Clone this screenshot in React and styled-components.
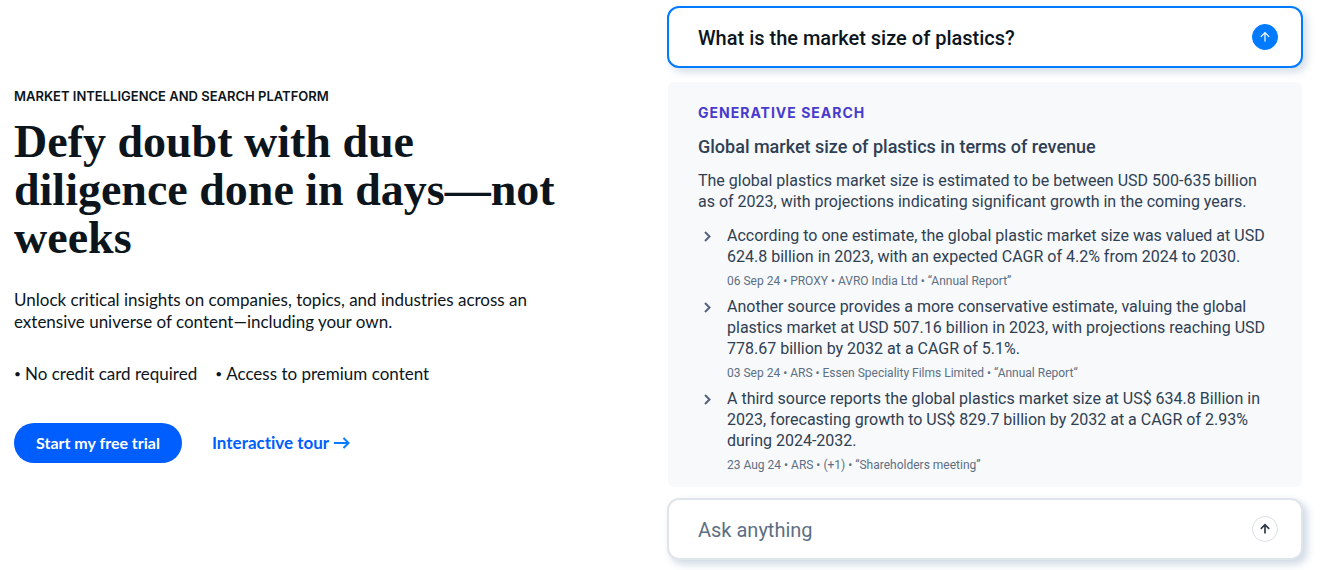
import React from "react";
import styled, { createGlobalStyle } from "styled-components";

const GlobalStyle = createGlobalStyle`
  *, *::before, *::after { box-sizing: border-box; }
  body { margin: 0; background: #fff; color: #0c151c; font-family: Lato, "Liberation Sans", sans-serif; font-variant-ligatures: none; }
  h1, h2, h3, p, ul { margin: 0; padding: 0; }
  ul { list-style: none; }
`;

const Hero = styled.main`
  display: grid;
  grid-template-columns: 1fr 1fr;
  align-items: start;
`;

const Intro = styled.section`
  padding: 88px 60px 0 14px;
`;

const Eyebrow = styled.p`
  font-family: Inter, sans-serif;
  font-size: 13px;
  font-weight: 600;
  line-height: 16px;
  text-transform: uppercase;
`;

const Title = styled.h1`
  margin-top: 14px;
  font-family: "Liberation Serif", serif;
  font-size: 46px;
  font-weight: 700;
  line-height: 48px;
`;

const Lead = styled.p`
  margin-top: 27px;
  font-size: 17px;
  line-height: 22px;
`;

const Perks = styled.ul`
  display: flex;
  gap: 18px;
  margin-top: 30px;
  font-size: 17px;
  line-height: 22px;
`;

const Perk = styled.li`
  display: flex;
  gap: 4px;
  &::before { content: "•"; font-size: 12px; }
`;

const Actions = styled.div`
  display: flex;
  align-items: center;
  gap: 30px;
  margin-top: 38px;
`;

const PrimaryButton = styled.button`
  height: 40px;
  padding: 0 22px;
  border: 0;
  border-radius: 20px;
  background: #005eff;
  color: #fff;
  font: 700 16px/20px Lato, "Liberation Sans", sans-serif;
  cursor: pointer;
`;

const TourLink = styled.a`
  display: flex;
  align-items: center;
  gap: 5px;
  color: #005eff;
  font-size: 17px;
  font-weight: 700;
  line-height: 20px;
  text-decoration: none;
`;

const Demo = styled.section`
  display: flex;
  flex-direction: column;
  padding: 6px 31px 10px 0;
  font-family: Roboto, "Liberation Sans", sans-serif;
`;

const SearchBox = styled.form`
  display: flex;
  align-items: center;
  height: 62px;
  padding: 0 23px 0 29px;
  border: 2px solid ${(p) => (p.$active ? "#007bff" : "#dfe5ea")};
  border-radius: 12px;
  background: #fff;
  box-shadow: 4px 4px 8px ${(p) => (p.$active ? "#d3dce6" : "#ccd7e3")};
`;

const SearchInput = styled.input`
  flex: 1;
  min-width: 0;
  height: 32px;
  padding: 2px 0 0;
  border: 0;
  outline: 0;
  background: transparent;
  color: #0c151c;
  font-family: inherit;
  font-size: 20px;
  font-weight: 500;
  &::placeholder { color: #5d6f83; font-weight: 400; opacity: 1; }
`;

const SendButton = styled.button`
  display: grid;
  place-items: center;
  width: 26px;
  height: 26px;
  padding: 0;
  border: 1px solid ${(p) => (p.$active ? "#007bff" : "#d9e0e6")};
  border-radius: 50%;
  background: ${(p) => (p.$active ? "#007bff" : "#fff")};
  color: ${(p) => (p.$active ? "#fff" : "#2f3b49")};
  cursor: pointer;
`;

const Answer = styled.article`
  margin: 14px 1px 11px;
  padding: 22px 16px 14px 30px;
  border-radius: 6px;
  background: #f7f9fb;
  color: #2f4053;
`;

const AnswerLabel = styled.h2`
  color: #473bce;
  font-family: Inter, sans-serif;
  font-size: 14px;
  font-weight: 700;
  line-height: 18px;
  letter-spacing: 1px;
  text-transform: uppercase;
`;

const AnswerTitle = styled.h3`
  margin-top: 14px;
  font-size: 18px;
  font-weight: 500;
  line-height: 21px;
`;

const AnswerText = styled.p`
  font-size: 16px;
  line-height: 21px;
`;

const Summary = styled(AnswerText)`
  margin-top: 13px;
`;

const Findings = styled.ul`
  display: flex;
  flex-direction: column;
  gap: 7px;
  margin-top: 13px;
`;

const Finding = styled.li`
  display: flex;
  gap: 14px;
  padding-left: 3px;
`;

const Chevron = styled.svg`
  flex: none;
  width: 12px;
  height: 21px;
  color: #53647a;
`;

const Source = styled.p`
  margin-top: 6px;
  color: #5d6f83;
  font-size: 12px;
  line-height: 16px;
`;

const findings = [
  {
    lines: ["According to one estimate, the global plastic market size was valued at USD", "624.8 billion in 2023, with an expected CAGR of 4.2% from 2024 to 2030."],
    source: "06 Sep 24 •  PROXY • AVRO India Ltd • “Annual Report”",
  },
  {
    lines: ["Another source provides a more conservative estimate, valuing the global", "plastics market at USD 507.16 billion in 2023, with projections reaching USD", "778.67 billion by 2032 at a CAGR of 5.1%."],
    source: "03 Sep 24 • ARS • Essen Speciality Films Limited • “Annual Report“",
  },
  {
    lines: ["A third source reports the global plastics market size at US$ 634.8 Billion in", "2023, forecasting growth to US$ 829.7 billion by 2032 at a CAGR of 2.93%", "during 2024-2032."],
    source: "23 Aug 24 • ARS • (+1) • “Shareholders meeting”",
  },
];

function Lines({ lines }) {
  return lines.map((line, i) => (
    <React.Fragment key={line}>
      {i > 0 && <br />}
      {line}
    </React.Fragment>
  ));
}

function UpArrow({ weight }) {
  return (
    <svg width="12" height="12" viewBox="0 0 12 12" fill="none" stroke="currentColor" strokeWidth={weight} aria-hidden="true">
      <path d="M6 10.5V2M1.8 5.8 6 1.6 10.2 5.8" />
    </svg>
  );
}

function Search({ active, label, ...input }) {
  return (
    <SearchBox $active={active} onSubmit={(e) => e.preventDefault()}>
      <SearchInput type="text" aria-label={label} {...input} />
      <SendButton type="submit" $active={active} aria-label="Send">
        <UpArrow weight={active ? 1.2 : 1.7} />
      </SendButton>
    </SearchBox>
  );
}

export default function App() {
  return (
    <>
      <GlobalStyle />
      <Hero>
        <Intro>
          <Eyebrow>Market intelligence and search platform</Eyebrow>
          <Title><Lines lines={["Defy doubt with due", "diligence done in days—not", "weeks"]} /></Title>
          <Lead><Lines lines={["Unlock critical insights on companies, topics, and industries across an", "extensive universe of content—including your own."]} /></Lead>
          <Perks>
            <Perk>No credit card required</Perk>
            <Perk>Access to premium content</Perk>
          </Perks>
          <Actions>
            <PrimaryButton type="button">Start my free trial</PrimaryButton>
            <TourLink href="#tour">
              Interactive tour
              <svg width="16" height="12" viewBox="0 0 16 12" fill="none" stroke="#0a7cff" strokeWidth="2" aria-hidden="true">
                <path d="M0 6h14M9.5 1l5 5-5 5" />
              </svg>
            </TourLink>
          </Actions>
        </Intro>
        <Demo>
          <Search active label="Question" defaultValue="What is the market size of plastics?" />
          <Answer>
            <AnswerLabel>Generative search</AnswerLabel>
            <AnswerTitle>Global market size of plastics in terms of revenue</AnswerTitle>
            <Summary><Lines lines={["The global plastics market size is estimated to be between USD 500-635 billion", "as of 2023, with projections indicating significant growth in the coming years."]} /></Summary>
            <Findings>
              {findings.map((f) => (
                <Finding key={f.source}>
                  <Chevron viewBox="0 0 12 21" fill="none" stroke="currentColor" strokeWidth="2" aria-hidden="true">
                    <path d="M4 7 8.5 11.5 4 16" />
                  </Chevron>
                  <div>
                    <AnswerText><Lines lines={f.lines} /></AnswerText>
                    <Source>{f.source}</Source>
                  </div>
                </Finding>
              ))}
            </Findings>
          </Answer>
          <Search label="Follow-up question" placeholder="Ask anything" />
        </Demo>
      </Hero>
    </>
  );
}
